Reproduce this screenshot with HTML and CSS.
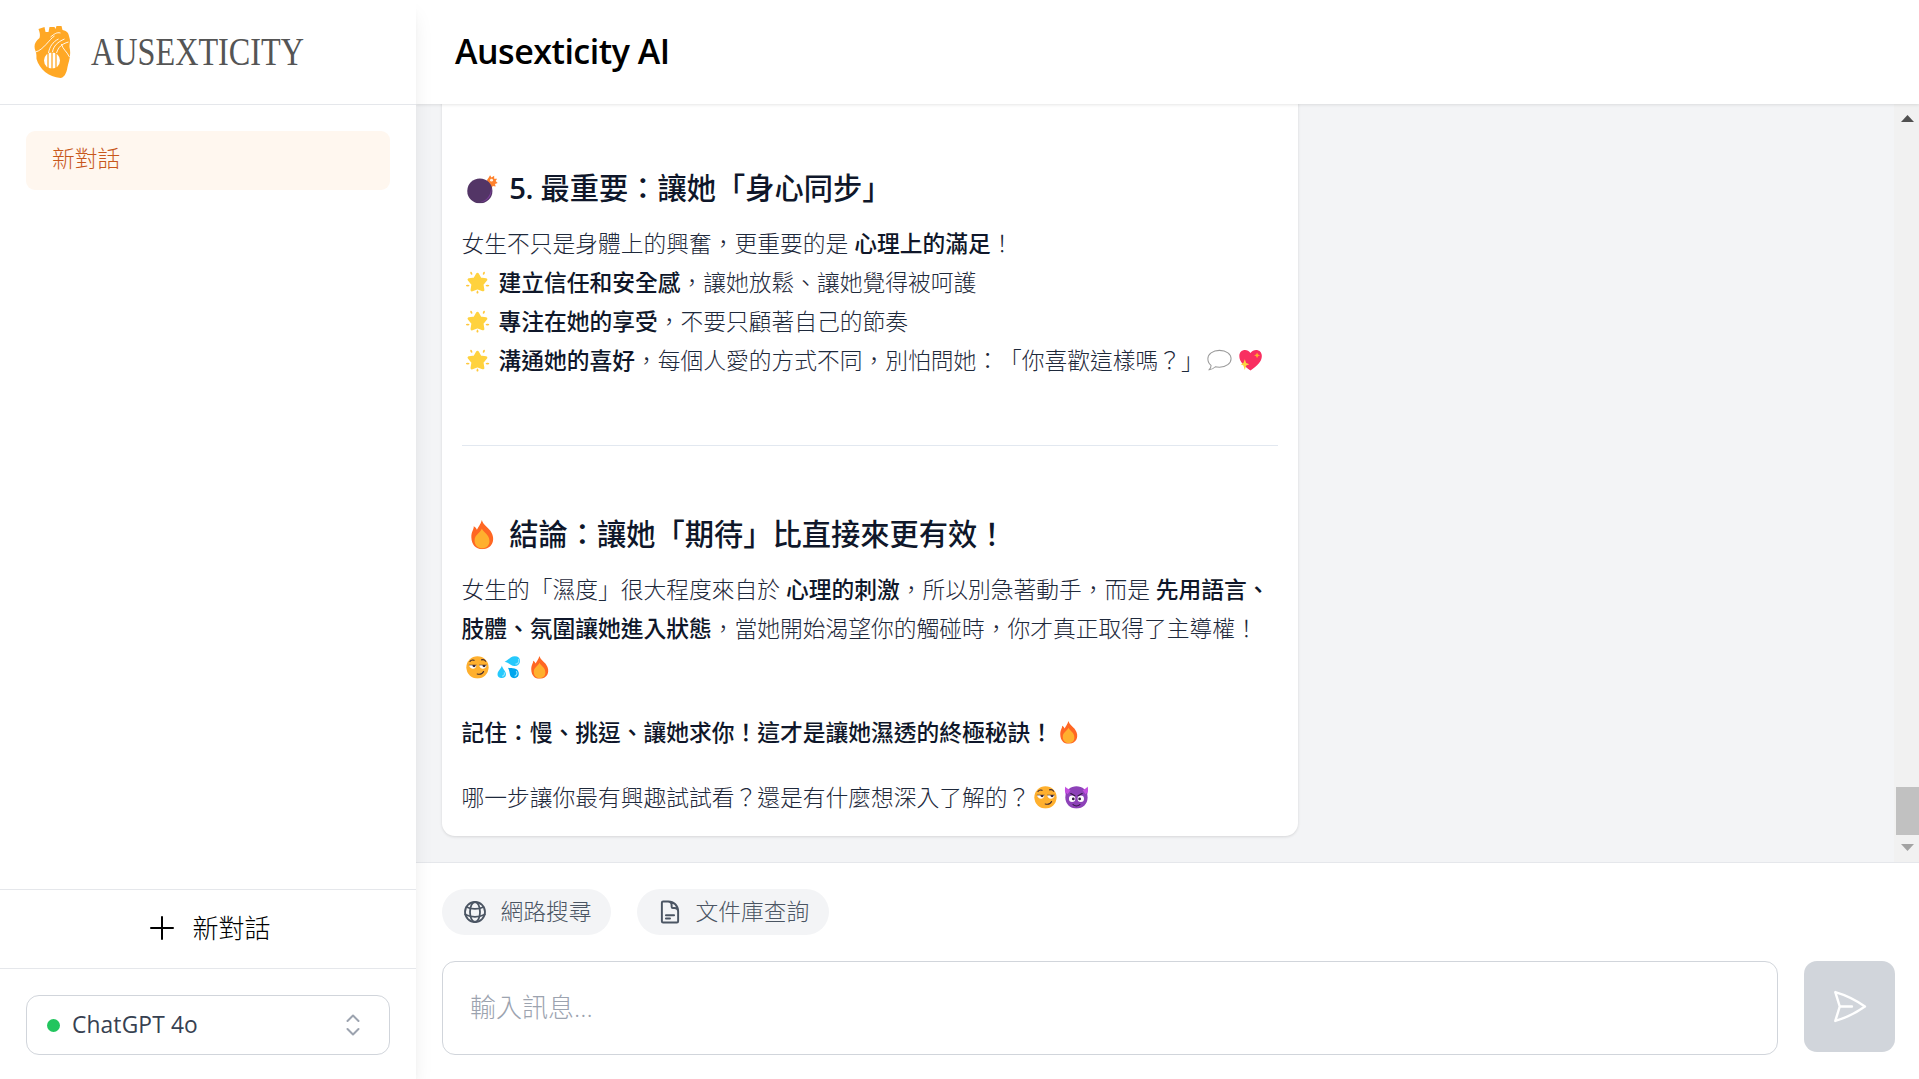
FILE: index.html
```html
<!DOCTYPE html>
<html lang="zh-Hant">
<head>
<meta charset="utf-8">
<title>Ausexticity AI</title>
<link rel="stylesheet" href="styles.css">
</head>
<body>
<svg class="defs" aria-hidden="true">
  <symbol id="bomb" viewBox="0 0 137 100">
    <path d="M86 20l5-7 5-9 5 8 9-6 0 10 10 0-5 8 7 7-9 3 2 9-10-2-4 9-6-8-9-2z" fill="#ff822d"/>
    <circle cx="101" cy="21" r="5" fill="#fff3e6"/>
    <circle cx="61" cy="58" r="43" fill="#533566"/>
    <path d="M100 45c6 26-12 50-38 51 24-6 37-24 38-51z" fill="#7d3f9c"/>
  </symbol>
  <symbol id="star" viewBox="0 0 137 100">
    <path d="M68 14l12 21 25 3-17 20 4 25-24-9-24 9 4-25-17-20 25-3z" fill="#ffd23e" stroke="#ffd23e" stroke-width="13" stroke-linejoin="round"/>
    <g fill="#ffc83d"><ellipse cx="41" cy="10" rx="4" ry="7" transform="rotate(-25 41 10)"/><ellipse cx="96" cy="10" rx="4" ry="7" transform="rotate(25 96 10)"/><ellipse cx="25" cy="64" rx="8" ry="4"/><ellipse cx="112" cy="64" rx="8" ry="4"/><ellipse cx="68" cy="93" rx="4" ry="7"/></g>
  </symbol>
  <symbol id="bubble" viewBox="0 0 137 100">
    <path d="M68 6c31 0 51 17 51 37S98 80 68 80c-6 0-13 0-18-2-8 8-17 12-27 13 5-6 8-13 8-19C22 65 17 54 17 43 17 23 38 6 68 6z" fill="#fff" stroke="#9a9a9a" stroke-width="4.500"/>
  </symbol>
  <symbol id="heart" viewBox="0 0 137 100">
    <path d="M68 94C38 75 19 55 19 31 19 2 54-4 68 18 83-4 118 2 118 31c0 24-20 44-50 63z" fill="#f92f60"/>
    <path d="M97 15l4 9 9 4-9 4-4 9-4-9-9-4 9-4z" fill="#ffb02e"/>
    <path d="M43 45l6 16 14 6-14 6-6 19-6-19-12-6 12-6z" fill="#fcd53f"/>
  </symbol>
  <symbol id="fire" viewBox="0 0 137 100">
    <path d="M32 60c-1-22 10-29 8-39 6 3 9 7 11 12C55 24 64 15 68 0c4 17 20 24 29 37 21 30 6 63-28 63-23 0-36-16-37-40z" fill="#ff6723"/>
    <path d="M43 70c0-20 18-24 25-40 7 14 26 21 26 42 0 16-11 25-25 25S43 87 43 70z" fill="#ffb02e"/>
  </symbol>
  <symbol id="smirk" viewBox="0 0 137 100">
    <circle cx="68" cy="50" r="49" fill="#ffb02e"/>
    <path d="M31 40h32c1 22-29 22-32 0zM76 40h32c-1 22-31 22-32 0z" fill="#fff"/>
    <path d="M46 40h14c0 13-14 13-14 0zM90 40h14c0 13-14 13-14 0z" fill="#402a32"/>
    <path d="M30 40h34M75 40h34" stroke="#402a32" stroke-width="2.500"/>
    <path d="M35 24c4-6 10-8 18-5M86 17c8-3 14 0 18 6M67 79c12 3 24-2 28-11" fill="none" stroke="#402a32" stroke-width="5" stroke-linecap="round"/>
  </symbol>
  <symbol id="sweat" viewBox="0 0 137 100">
    <path d="M51 25C66 20 76 1 96 1c15 0 24 9 23 22-1 14-12 22-25 21-15-1-24-16-43-19z" fill="#26c9fc"/>
    <path d="M39 42c3 15 18 24 18 38 0 11-7 17-18 17s-20-7-19-18c1-14 16-22 19-37z" fill="#26c9fc"/>
    <path d="M66 52c18 4 43-3 47 22 2 14-7 24-20 24-24-1-16-28-27-46z" fill="#00a6ed"/>
    <path d="M112 13c5 11-2 22-13 23M49 72c4 9-1 15-9 17M102 67c7 8 2 20-7 22" fill="none" stroke="#90e4ff" stroke-width="5"/>
  </symbol>
  <symbol id="devil" viewBox="0 0 137 100">
    <path d="M20 2c6 14 14 20 26 20L31 50C16 38 15 17 20 2zM116 2c-6 14-14 20-26 20l15 28c15-12 16-33 11-48z" fill="#c34fe0"/>
    <path d="M68 1c25 0 49 17 49 50 0 29-21 48-49 48S19 80 19 51C19 18 43 1 68 1z" fill="#8d42b8"/>
    <path d="M19 5l23 14-13 17c-10-9-12-20-10-31zM117 5L95 19l13 17c9-9 11-20 9-31z" fill="#c34fe0"/>
    <circle cx="49" cy="56" r="14" fill="#fff"/><circle cx="87" cy="56" r="14" fill="#fff"/>
    <circle cx="54" cy="57" r="6" fill="#321b41"/><circle cx="82" cy="57" r="6" fill="#321b41"/>
    <path d="M43 33l18 10M93 33L75 43M53 82c9 7 21 7 30 0" fill="none" stroke="#321b41" stroke-width="5" stroke-linecap="round"/>
  </symbol>
</svg>

<div class="app">
  <aside class="sidebar">
    <div class="brand">
      <svg class="brand-mark" viewBox="0 0 36 54">
        <path fill="#ffa825" d="M4 4l6-2 1 5 3 0 1-5 5 0 1 2 1-3 5 0 1 4c5 1 6 3 7 8 1 3 0 5 0 9 2 9-1 15-2 20-1 7-4 11-7 11C14 52 5 44 2 34 2 30 2 29 1 26-1 21 0 17 5 13 6 9 5 7 4 4z"/>
        <circle cx="17.500" cy="35.500" r="8" fill="#fff"/>
        <path d="M13.500 28v16M17.500 27v17M21.500 28v16" stroke="#ffa825" stroke-width="1.300"/>
        <path d="M1 27C9 25 15 14 20 11M14 28c1-6 4-11 10-14M18 27c1-6 5-10 12-13M22 28c2-6 5-9 12-11M16 12c4-3 6-5 10-4M27 19c1 5 5 7 8 13" fill="none" stroke="#fff" stroke-width=".9"/>
      </svg>
      <svg class="brand-name" viewBox="0 0 225 54"><text x="0" y="40" textLength="213" lengthAdjust="spacingAndGlyphs">AUSEXTICITY</text></svg>
    </div>
    <nav class="history"><a class="history-item">新對話</a></nav>
    <button class="new-chat">
      <svg viewBox="0 0 24 24"><path d="M12 1v22M1 12h22"/></svg>
      <span>新對話</span>
    </button>
    <div class="model-wrap">
      <div class="model">
        <i class="dot"></i><span class="model-name">ChatGPT 4o</span>
        <svg viewBox="0 0 14 22"><path d="M1.500 7L7 1.500 12.500 7M1.500 15L7 20.500 12.500 15"/></svg>
      </div>
    </div>
  </aside>

  <main class="main">
    <header class="topbar"><h1>Ausexticity AI</h1></header>
    <section class="chat">
      <div class="scroll">
        <article class="message">
          <h3><svg class="emoji"><use href="#bomb"/></svg> <span class="num">5.</span> 最重要：讓她「身心同步」</h3>
          <p>女生不只是身體上的興奮，更重要的是 <strong>心理上的滿足</strong>！<br>
          <svg class="emoji"><use href="#star"/></svg> <strong>建立信任和安全感</strong>，讓她放鬆、讓她覺得被呵護<br>
          <svg class="emoji"><use href="#star"/></svg> <strong>專注在她的享受</strong>，不要只顧著自己的節奏<br>
          <svg class="emoji"><use href="#star"/></svg> <strong>溝通她的喜好</strong>，每個人愛的方式不同，別怕問她：「你喜歡這樣嗎？」<svg class="emoji"><use href="#bubble"/></svg><svg class="emoji"><use href="#heart"/></svg></p>
          <hr>
          <h3><svg class="emoji"><use href="#fire"/></svg> 結論：讓她「期待」比直接來更有效！</h3>
          <p>女生的「濕度」很大程度來自於 <strong>心理的刺激</strong>，所以別急著動手，而是 <strong>先用語言、<br>肢體、氛圍讓她進入狀態</strong>，當她開始渴望你的觸碰時，你才真正取得了主導權！<br><svg class="emoji"><use href="#smirk"/></svg><svg class="emoji"><use href="#sweat"/></svg><svg class="emoji"><use href="#fire"/></svg></p>
          <p><strong>記住：慢、挑逗、讓她求你！這才是讓她濕透的終極秘訣！</strong><svg class="emoji"><use href="#fire"/></svg></p>
          <p>哪一步讓你最有興趣試試看？還是有什麼想深入了解的？<svg class="emoji"><use href="#smirk"/></svg><svg class="emoji"><use href="#devil"/></svg></p>
        </article>
      </div>
      <div class="scrollbar"><i class="arrow up"></i><i class="thumb"></i><i class="arrow down"></i></div>
    </section>
    <footer class="composer">
      <div class="tools">
        <button class="pill"><svg viewBox="0 0 26 26"><circle cx="13" cy="13" r="10"/><ellipse cx="13" cy="13" rx="5" ry="10"/><path d="M4.500 8c5 2.600 12 2.600 17 0M3.200 15.500c6 2.900 13.600 2.900 19.600 0"/></svg><span>網路搜尋</span></button>
        <button class="pill"><svg viewBox="0 0 24 24"><path d="M19.500 14.250v-2.625a3.375 3.375 0 0 0-3.375-3.375h-1.500A1.125 1.125 0 0 1 13.500 7.125v-1.500a3.375 3.375 0 0 0-3.375-3.375H8.250m0 12.750h7.500m-7.500 3H12M10.500 2.250H5.625c-.621 0-1.125.504-1.125 1.125v17.250c0 .621.504 1.125 1.125 1.125h12.750c.621 0 1.125-.504 1.125-1.125V11.250a9 9 0 0 0-9-9Z"/></svg><span>文件庫查詢</span></button>
      </div>
      <div class="entry">
        <div class="input">輸入訊息...</div>
        <button class="send"><svg viewBox="0 0 24 24"><path d="M6 12 3.269 3.125A59.769 59.769 0 0 1 21.485 12 59.768 59.768 0 0 1 3.270 20.875L5.999 12Zm0 0h7.500"/></svg></button>
      </div>
    </footer>
  </main>
</div>
</body>
</html>
```
FILE: styles.css
```css
* { box-sizing: border-box; }
body {
  margin: 0;
  font-family: "Open Sans", "Noto Sans CJK TC", sans-serif;
  font-size: 22.75px;
  font-weight: 300;
  text-spacing-trim: space-all;
  color: #1e293b;
  background: #fff;
}
button { font: inherit; border: 0; background: none; padding: 0; color: inherit; }
svg { display: block; flex: none; }
.defs { position: absolute; width: 0; height: 0; }
.app { display: flex; height: 1079px; overflow: hidden; }

.sidebar {
  position: relative;
  z-index: 2;
  width: 416px;
  flex: none;
  display: flex;
  flex-direction: column;
  background: #fff;
  box-shadow: 0 13px 20px -4px rgba(0, 0, 0, .1), 0 5px 8px -5px rgba(0, 0, 0, .1);
}
.brand {
  height: 105px;
  display: flex;
  align-items: center;
  gap: 20px;
  padding: 0 0 1px 34px;
  border-bottom: 1px solid #e5e7eb;
}
.brand-mark { width: 37px; height: 54px; }
.brand-name { width: 225px; height: 54px; overflow: visible; }
.brand-name text { font: 400 39px "Liberation Serif", serif; fill: #555; }
.history { flex: 1; padding: 26px; }
.history-item {
  display: block;
  height: 59px;
  padding-left: 26px;
  line-height: 56px;
  border-radius: 9px;
  background: #fff7ef;
  color: #c8571b;
}
.new-chat {
  height: 79px;
  display: flex;
  align-items: center;
  justify-content: center;
  gap: 18px;
  padding: 0 0 2px 5px;
  border-top: 1px solid #e5e7eb;
  font-size: 26px;
  color: #000;
}
.new-chat svg { width: 24px; height: 24px; fill: none; stroke: #000; stroke-width: 2; stroke-linecap: round; }
.new-chat span { margin-top: -2px; }
.model-wrap { height: 111px; padding: 26px; border-top: 1px solid #e5e7eb; }
.model {
  height: 60px;
  display: flex;
  align-items: center;
  padding: 0 29px 0 20px;
  border: 1px solid #d1d5db;
  border-radius: 13px;
  font-weight: 400;
  color: #374151;
}
.dot { width: 13px; height: 13px; margin-right: 12px; border-radius: 50%; background: #22c55e; }
.model-name { flex: 1; margin-top: -2px; letter-spacing: .15px; }
.model svg { width: 14px; height: 22px; fill: none; stroke: #9ca3af; stroke-width: 2; stroke-linecap: round; stroke-linejoin: round; }

.main { flex: 1; min-width: 0; display: flex; flex-direction: column; }
.topbar {
  position: relative;
  z-index: 1;
  height: 104px;
  display: flex;
  align-items: center;
  padding: 0 0 2px 39px;
  background: #fff;
  box-shadow: 0 1px 3px rgba(0, 0, 0, .1);
}
.topbar h1 { margin: 0; font-size: 34px; font-weight: 600; letter-spacing: -.5px; color: #000; }
.chat { height: 758px; display: flex; background: #f3f4f6; overflow: hidden; }
.scroll {
  flex: 1;
  display: flex;
  flex-direction: column;
  justify-content: flex-end;
  padding: 0 26px 26px;
}
.message {
  width: 856px;
  padding: 90px 0 19.500px 19.500px;
  border-radius: 13px;
  background: #fff;
  box-shadow: 0 1px 3px rgba(0, 0, 0, .12);
  line-height: 39px;
  white-space: nowrap;
}
.message h3 {
  margin: 0 0 13px;
  font-size: 29.250px;
  font-weight: 500;
  line-height: 46px;
  color: #0f172a;
}
.num { font-weight: 600; letter-spacing: -.5px; }
.message p { margin: 0 0 26px; }
.message p:last-child { margin: 0; }
.message strong { font-weight: 500; color: #0f172a; }
.message hr { width: 816px; margin: 65px 0; border: 0; border-top: 1px solid #e2e8f0; }
.emoji { display: inline-block; width: 1.37em; height: 1em; vertical-align: -.15em; overflow: visible; }

.scrollbar { width: 25px; padding-left: 2px; display: flex; flex-direction: column; align-items: center; background: #f1f1f1; }
.thumb { width: 23px; height: 48px; margin-top: auto; background: #c1c1c1; }
.arrow { width: 13px; height: 7px; background: #a3a3a3; }
.arrow.up { margin-top: 11px; background: #505050; clip-path: polygon(50% 0, 100% 100%, 0 100%); }
.arrow.down { margin: 9px 0 11px; clip-path: polygon(0 0, 100% 0, 50% 100%); }

.composer { flex: 1; padding: 26px 24px 24px 26px; border-top: 1px solid #e5e7eb; background: #fff; }
.tools { display: flex; gap: 26px; }
.pill {
  height: 46px;
  display: flex;
  align-items: center;
  gap: 13px;
  padding: 0 19.500px;
  border-radius: 23px;
  background: #f3f4f6;
  color: #4b5563;
}
.pill svg { width: 26px; height: 26px; fill: none; stroke: #4b5563; stroke-width: 1.800; stroke-linecap: round; stroke-linejoin: round; }
.pill span { margin-top: -4px; }
.entry { display: flex; gap: 26px; margin-top: 26px; }
.input {
  flex: 1;
  height: 94px;
  padding-left: 27px;
  line-height: 90px;
  border: 1px solid #d1d5db;
  border-radius: 13px;
  font-size: 26px;
  color: #9ca3af;
}
.send { width: 91px; height: 91px; display: grid; place-items: center; border-radius: 13px; background: #d1d5db; }
.send svg { width: 39px; height: 39px; fill: none; stroke: #fff; stroke-width: 1.500; stroke-linecap: round; stroke-linejoin: round; }
```
